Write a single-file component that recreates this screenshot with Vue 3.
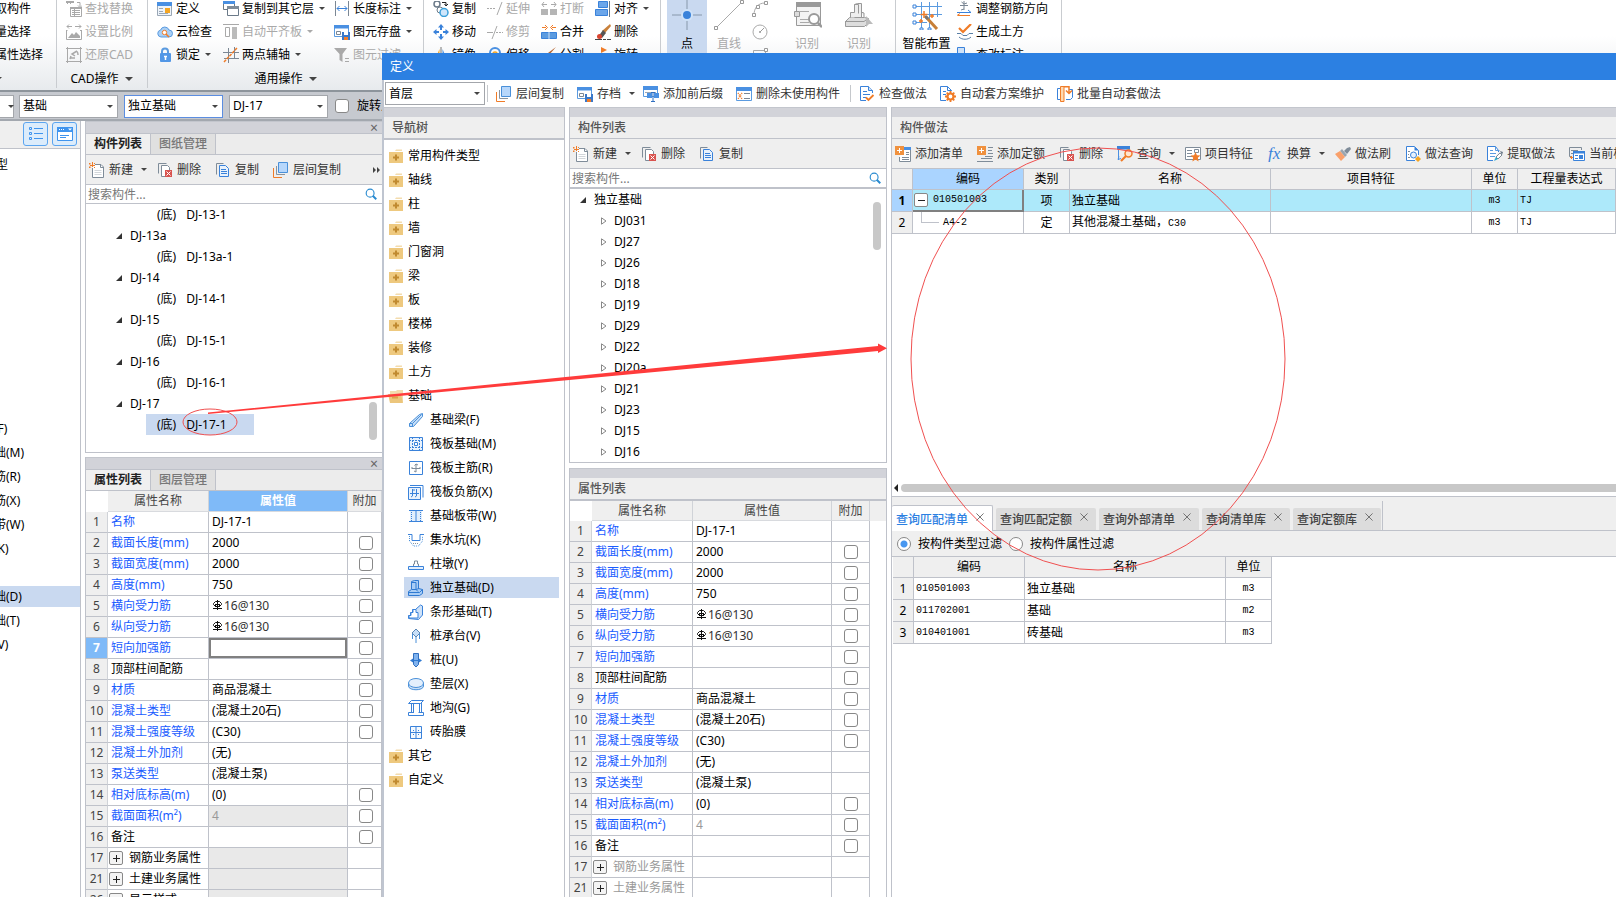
<script setup>
import { ref } from 'vue'

const icons = {
  find: '<g fill="none" stroke="#a9a9a9"><path d="M1.5 0v3M4.5 0v3M7.500 0v2M11 1.500h3v4M12 4.500l2 2 2-2"/><path d="M4.500 6.500h11v9h-11z"/><path d="M6 9.500h8M6 11.500h8M6 13.500h8M8.500 8v7"/></g><path d="M0 0h8v2H0zM4 6h12v2H4z" fill="#a9a9a9"/>',
  scale: '<g fill="none" stroke="#a9a9a9"><path d="M1 2.500h5M9 2.500h6M3 .5l-2 2 2 2M13 .5l2 2-2 2M.5 6v9.500h15V6M.5 6.500h1M14 6.500h1"/></g><path d="M2 14l4-5 2 2 2-3 4 4v2z" fill="#a9a9a9"/>',
  restore: '<g fill="none" stroke="#a9a9a9"><path d="M0 1.500h16M0 14.500h16M1.500 0v16M14.500 0v16"/><path d="M5 9l-1 3M8 6c3-3 4-1 4 2M11 4L6 7l3 2M4 11h5" stroke-width="1.500"/></g>',
  define: '<path d="M.5 1.500h14v13H.5z" fill="#eef4fb" stroke="#9aa7b5"/><path d="M0 1h15v4H0z" fill="#4a90e2"/><path d="M2 7.500h4M2 10.500h4M2 12.500h9" stroke="#9aa7b5"/><path d="M8 7h5v5H8z" fill="#f5a623"/>',
  cloud: '<path d="M4 13a3.500 3.500 0 0 1-.5-6.900A4.500 4.500 0 0 1 12 6a3.500 3.500 0 0 1 0 7z" fill="#a9cff5" stroke="#5b9be0"/><circle cx="7.500" cy="8.500" r="2.200" fill="#fff" stroke="#f07c28"/><path d="M9 10l3 3" stroke="#f07c28" stroke-width="1.500"/>',
  lock: '<path d="M5 7V4.500a3 3 0 0 1 6 0V7" fill="none" stroke="#5b9be0" stroke-width="2"/><rect x="3" y="6" width="11" height="9" rx="1" fill="#5297e6"/><path d="M8.500 9v4M7 9.500h3" stroke="#fff" stroke-width="1.500"/>',
  copyfloor: '<path d="M.5.5h11v8H.5z" fill="#fff" stroke="#6b7a89"/><path d="M0 0h12v3H0z" fill="#4a90e2"/><path d="M4.500 5.500h11v9h-11z" fill="#fff" stroke="#6b7a89"/><path d="M4 5h12v3H4z" fill="#7f8c99"/>',
  autoalign: '<path d="M0 .5h16" stroke="#a9a9a9"/><path d="M2.500 3.500h4v9h-4z" fill="none" stroke="#a9a9a9"/><path d="M9 3h5v12H9z" fill="#bbb"/>',
  twopt: '<g fill="none" stroke="#7b8794"><path d="M0 5.500h16M1 11.500h15M5.500 1v15M11.500 0v12"/></g><path d="M1 15L14 1" stroke="#f07c28" stroke-width="1.500" stroke-dasharray="3 1"/>',
  dimlen: '<path d="M1.500 0v15M14.500 0v15" stroke="#7b8794"/><path d="M3 7.500h10M5.500 5L3 7.500 5.500 10M10.500 5L13 7.500 10.500 10" fill="none" stroke="#3a82da"/>',
  save: '<path d="M.5 1.500h14v11H.5z" fill="#fff" stroke="#5b9be0"/><path d="M0 1h15v3.500H0z" fill="#4a90e2"/><path d="M2.500 7.500h4v3h-4z" fill="none" stroke="#7b8794"/><path d="M8 8h8v8H8z" fill="#3a78c8"/><path d="M10 8h4v3h-4z" fill="#fff"/><path d="M10 13h4v3h-4z" fill="#f07c28"/>',
  filter: '<path d="M0 1h13L8.500 7v8l-3-2V7z" fill="#a9a9a9"/><path d="M11 11.500h4M11 14.500h4" stroke="#a9a9a9"/>',
  copyc: '<circle cx="4" cy="3" r="3" fill="none" stroke="#6b7a89" stroke-width="1.500"/><circle cx="7" cy="9" r="3" fill="none" stroke="#6b7a89"/><circle cx="11" cy="11.500" r="4" fill="#cfe6fb" stroke="#3a9fd9" stroke-width="1.500"/><path d="M9 1.500h4v3M11.500 3l1.500 2 2-2" fill="none" stroke="#222"/>',
  move: '<path d="M8 0l3 3.500H5zM8 16l3-3.500H5zM0 8l3.500-3v6zM16 8l-3.500-3v6z" fill="#3a82da"/><path d="M8 3v3M8 10v3M3 8h3M10 8h3" stroke="#3a82da" stroke-width="2"/>',
  mirror: '<path d="M6.500 2v13H1z" fill="#f5a623"/><path d="M9.500 2v13H15z" fill="#4a90e2"/><path d="M8 0v16" stroke="#777"/>',
  extend: '<path d="M0 7.500h9" stroke="#a9a9a9" stroke-dasharray="2 1"/><path d="M15 1l-5 13" stroke="#a9a9a9"/>',
  trim: '<path d="M0 8.500h6" stroke="#a9a9a9"/><path d="M9 8.500h7" stroke="#a9a9a9" stroke-dasharray="2 1"/><path d="M10 2L5 15" stroke="#a9a9a9"/>',
  trimoff: '<path d="M3 16V6a5 5 0 0 1 10 0v10" fill="none" stroke="#4a90e2" stroke-width="2"/><path d="M6 16V7a2 2 0 0 1 4 0v9" fill="none" stroke="#f5a623" stroke-width="1.500"/>',
  breaks: '<path d="M0 8h7v6H0zM9 8h7v6H9z" fill="#b5b5b5"/><path d="M1 3.500h5M10 3.500h5M3 1L1 3.500 3 6M13 1l2 2.500L13 6" fill="none" stroke="#a9a9a9"/>',
  merge: '<path d="M.5 8.500h15v6H.5z" fill="#5b9be0" stroke="#3a82da"/><path d="M8 8v7" stroke="#cfe2f8"/><path d="M1 3.500h4M11 3.500h4M4 1l2.500 2.500L4 6M12 1L9.500 3.500 12 6" fill="none" stroke="#f07c28"/>',
  split: '<path d="M0 9h16v6H0z" fill="#5b9be0"/><path d="M15 0L8 8l-2 1 1-3z" fill="#b5622d"/>',
  align: '<path d="M3.500.5h9v6h-9zM.500 8.500h12v6H.5z" fill="#6ba6ea" stroke="#3a82da"/><path d="M14.500 0v16" stroke="#6b7a89"/>',
  erase: '<path d="M15 0l1 2-6 7-3-2z" fill="#c9803a"/><path d="M8 6l3 3-4 5-4-1z" fill="#555"/><circle cx="4.500" cy="12.500" r="2.500" fill="#d9442f"/><path d="M0 15.500h16" stroke="#444" stroke-dasharray="7 1 3 1"/>',
  rotate: '<path d="M2 14a6 6 0 1 1 12 0" fill="none" stroke="#4a90e2" stroke-width="1.800"/><path d="M6 0l6 3-6 3z" fill="#f07c28"/>',
  tlist: '<g fill="none" stroke="#3f94ee"><path d="M1.500 1.500h2v2h-2zM1.500 6.500h2v2h-2zM1.500 11.500h2v2h-2zM6 2.500h9M6 7.500h9M6 12.500h9"/></g>',
  twin: '<path d="M.500 1.500h15v13H.5z" fill="#fff" stroke="#3f94ee"/><path d="M0 1h16v5H0z" fill="#3f94ee"/><path d="M2 3.500h6" stroke="#fff" stroke-dasharray="1 1"/><path d="M11 2.500h4l-2 2z" fill="#fff"/><path d="M3 9.500h9M3 11.500h6" stroke="#3f94ee"/>',
  fresh: '<path d="M6 2.500h6l2.500 2.500v10.500h-11V6" fill="#fff" stroke="#7f8c99"/><path d="M11.500 2.500v3h3" fill="none" stroke="#7f8c99"/><path d="M5.500 8.500h7M5.500 10.500h7M5.500 12.500h7" stroke="#d2d6da"/><path d="M0 1h1.500v1.500H0zM3 0h1v5H3zM5 1h1v1H5zM1 3h5v1H1zM0 4.500h1.500V6H0zM5 5h1v1H5z" fill="#f07c28"/>',
  del: '<path d="M1.500 11.500v-10h8" fill="none" stroke="#7f8c99"/><path d="M8 14.500H4.500v-11h6l2 2V8" fill="#fff" stroke="#7f8c99"/><path d="M8 8h7v7H8z" fill="#d9534f"/><path d="M9.500 9.500l4 4M13.500 9.500l-4 4" stroke="#fff"/>',
  copy: '<path d="M1.500 12.500v-11h7" fill="none" stroke="#7f8c99"/><path d="M4.500 3.500h6l3 3v8h-9z" fill="#e9f2fc" stroke="#3a82da"/><path d="M6 7.500h5M6 9.500h6M6 11.500h6" stroke="#3a82da"/>',
  floors: '<path d="M.5 6v9.500H9" fill="none" stroke="#f07c28"/><path d="M3.500 4v8.500H12" fill="none" stroke="#8a949e"/><path d="M5.500.5h9v10h-9z" fill="#b7d7fb" stroke="#4a90d9"/>',
  search: '<circle cx="7" cy="7" r="4.500" fill="none" stroke="#2a8bd0" stroke-width="1.300"/><path d="M10 10l4 4" stroke="#2a8bd0" stroke-width="2.200"/>',
  folder: '<path d="M1 4h14v11H1z" fill="#eec97f"/><path d="M8 1.500h6V3H7z" fill="#f3dcae"/><path d="M8 6.500v6M5 9.500h6" stroke="#c08a30" stroke-width="2"/>',
  folderopen: '<path d="M2 3h6l1-1h6v12H2z" fill="#f3dcae"/><path d="M0 6h13l2 9H2z" fill="#ecc67c"/><path d="M4 9.500h6" stroke="#d9a44a" stroke-width="2"/>',
  beam: '<path d="M1.500 11.500l10-9 3-1v3l-9 10h-4z" fill="#c7dff8" stroke="#4a90d9"/><path d="M1.500 11.500h3v3M4.500 11.500l9-9" fill="none" stroke="#4a90d9"/>',
  raft: '<path d="M1.500 1.500h13v13h-13z" fill="#e9f2fc" stroke="#3a82da"/><path d="M4.500 1v14M11.500 1v14M1 4.500h14M1 11.500h14" stroke="#3a82da" stroke-dasharray="2 1"/><path d="M6.500 6.500h3v3h-3z" fill="#fff" stroke="#3a82da"/>',
  rmain: '<path d="M1.500 1.500h13v13h-13z" fill="#fff" stroke="#3a82da"/><path d="M8 4v8M4 8.500h8M6.500 5.500L8 4l2 1M6 11l2 1M4 7v2M12 7v2" fill="none" stroke="#7f8c99"/>',
  rneg: '<path d="M.500 3.500h12v12H.5z" fill="#e9f2fc" stroke="#3a82da"/><path d="M2 1.500h13v12" fill="none" stroke="#3a82da"/><path d="M2 9.500h9M4.500 5v7l-1.500 1M8.500 5v7l-1.500 1M5 6h2" fill="none" stroke="#3a82da"/>',
  strip: '<path d="M2 2.500h12v11H2z" fill="#e3effc"/><path d="M1 2.500h14M1 13.500h14M8 3v10" stroke="#3a82da"/><path d="M3.500 4v9M12.500 4v9" stroke="#3a82da" stroke-dasharray="1 1"/>',
  sump: '<path d="M0 2.500h4v6h8v-6h4" fill="none" stroke="#3a82da"/><path d="M1.500 4v5l4 5h5l4-5V4" fill="none" stroke="#4a90d9" stroke-dasharray="1 1"/><path d="M5 11.500h6" stroke="#8a949e" stroke-dasharray="1 1"/>',
  pier: '<path d="M.500 10.500h15v3H.5z" fill="#e3effc" stroke="#3a82da"/><path d="M5.500 10v-2h1v-3h3v3h1v2" fill="#fff" stroke="#7f8c99"/>',
  iso: '<path d="M.500 11.500l3-2v-8l3-1h4v8l4 1v4l-3 2h-11z" fill="#a9cdf5" stroke="#2f7ad2"/><path d="M4 9.500h4l2 2M4 2.500h4v7l3-1M.500 12.500h11l3-3" fill="none" stroke="#2f7ad2"/>',
  bar: '<path d="M.500 14.500v-3h2v-3h2v-3h3l5-4.500 2 1v9l-4 4.500z" fill="#cfe2f8" stroke="#3a82da"/><path d="M1 14v-2.500h2v-3h2v-3h3v3h2v5.500z" fill="#fff" stroke="#3a82da"/>',
  cap: '<path d="M8 1l4 4-4 4-4-4z" fill="#c7dff8" stroke="#5b87b5"/><path d="M8 9v6M4.500 6v5M11.500 6v5" stroke="#4a90d9"/>',
  pile: '<path d="M5.500 1.500h5v11L8 15l-2.500-2.500z" fill="#7fb2ee" stroke="#2f6fc0"/><path d="M2 8.500l3-2v4zM14 8.500l-3-2v4z" fill="#2f7ad2"/><path d="M3 8.500h10" stroke="#2f7ad2"/>',
  pad: '<path d="M.5 7v3c0 5 15 5 15 0V7" fill="#c7dff8" stroke="#4a90d9"/><ellipse cx="8" cy="7" rx="7.500" ry="4.500" fill="#e3effc" stroke="#4a90d9"/>',
  ditch: '<path d="M.5 3.500l3-3h12l-3 3zM3.500 4v9M5.500 4v9M11.500 4v9M13.500 3v10M.5 15.500v-3h5M10.500 12.500h5v3h-15" fill="none" stroke="#3a82da"/>',
  mould: '<path d="M2.500 2.500h11v12h-11zM8 2v13M2 8.500h12" fill="#f4f9fe" stroke="#3a82da"/><path d="M5.500 6v5M10.500 6v5" stroke="#3a82da" stroke-dasharray="1 1"/>',
  prefix: '<path d="M.5.500h14v10H.5z" fill="#fff" stroke="#5b9be0"/><path d="M0 0h15v4H0zM4 7h5v5H4zM11 7h5v5h-5z" fill="#4a90e2"/><path d="M2 6.500h11" stroke="#9aa7b5"/><path d="M10 6v9M8 6.500h4M8 15.500h4" stroke="#2f6fc0"/>',
  unused: '<path d="M.500 1.500h15v13H.5z" fill="#fff" stroke="#5b9be0"/><path d="M0 1h16v4H0z" fill="#4a90e2"/><path d="M8 7.500h6M8 12.500h6" stroke="#7b8794"/><path d="M2 7l4 6M6 7l-4 6" stroke="#f07c28" stroke-dasharray="1 1" stroke-width="1.500"/>',
  check: '<path d="M13.500 7V4.500l-4-4h-8v14H7" fill="#fff" stroke="#3a82da"/><path d="M9.500.5v4h4" fill="#cfe2f8" stroke="#3a82da"/><path d="M4 5.500h4M4 8.500h7M4 11.500h3" stroke="#3a82da"/><path d="M7 11.500l2.500 2.500 5-5" fill="none" stroke="#f07c28" stroke-width="1.800"/>',
  gear: '<path d="M11.500 5V4.500l-4-4h-7v14H6" fill="#fff" stroke="#3a82da"/><path d="M7.500.5v4h4M3 5.500h3M3 8.500h3" fill="none" stroke="#3a82da"/><circle cx="10.500" cy="10.500" r="3" fill="#fff" stroke="#f07c28" stroke-width="2.200"/><path d="M10.500 5v2M10.500 14v2M5 10.500h2M14 10.500h2M6.700 6.700l1.500 1.500M14.300 14.300l-1.500-1.500M6.700 14.300l1.500-1.500M14.300 6.700l-1.500 1.500" stroke="#f07c28" stroke-width="1.800"/>',
  batch: '<path d="M3 2.500H.5v11H3M12 3.500h3.500v8l-2 2H9" fill="#fff" stroke="#3a82da"/><path d="M3.500 15.500V.5h3.500v15z" fill="#ffd9b0" stroke="#f07c28"/><path d="M7 .8h5v6M9 4.500l3 3 3-3" fill="none" stroke="#f07c28" stroke-width="1.500"/>',
  addlist: '<path d="M9 1.500h6.500v14h-11V11" fill="#fff" stroke="#7f8c99"/><path d="M9 1h7v3H9z" fill="#4a90e2"/><path d="M11 6.500h3M11 8.500h3M7 11.500h7M7 13.500h7" stroke="#7f8c99"/><path d="M0 0h9v9H0z" fill="#f0913e"/><path d="M4.500 2v5M2 4.500h5" stroke="#fff"/>',
  addquota: '<path d="M11 1.500h5M11 4.500h4M11 7.500h5M8 10.500h8M4 12.500h11M0 15.500h16" stroke="#7f8c99"/><path d="M0 0h9v9H0z" fill="#f0913e"/><path d="M4.500 2v5M2 4.500h5" stroke="#fff"/>',
  query: '<path d="M1.500 14v-13M12 1.500v3" stroke="#4a90e2"/><path d="M0 0h13v3.500H0z" fill="#3a82da"/><path d="M2 10.500l-1 3 3-1" fill="none" stroke="#4a90e2"/><circle cx="11.500" cy="7.500" r="3.500" fill="#ffe6cf" stroke="#f07c28" stroke-width="1.500"/><path d="M9 10l-5 5" stroke="#f07c28" stroke-width="2.200"/>',
  feature: '<path d="M.500 1.500h15v12H.5z" fill="#fff" stroke="#7f8c99"/><path d="M2 4.500h5M2 7.500h5M2 10.500h5M9.500 3.500h4v3h-4z" stroke="#7f8c99" fill="none"/><path d="M10.500 6l1.400 3.200 3.600.3-2.700 2.300.8 3.600-3.100-1.900-3.100 1.900.8-3.600L5.500 9.500l3.600-.3z" fill="#f07c28"/>',
  fx: '<text x="1" y="13" font-family="Liberation Serif, serif" font-style="italic" font-size="17" fill="#3a82da">fx</text>',
  brush: '<path d="M12 2l3-1 1 2-4 5-3-3z" fill="#7f8c99"/><path d="M7 3l5 6-2 2-5-6z" fill="#9aa5af"/><path d="M5 5l5 6-4 4-6-7z" fill="#f9a06b"/>',
  docsearch: '<path d="M13.500 9V4.500l-4-4h-8v14H10" fill="#fff" stroke="#3a82da"/><path d="M9.500.5v4h4z" fill="#3a82da"/><circle cx="8.500" cy="9" r="3" fill="#e6f1fd" stroke="#3a82da"/><path d="M3 5.500h2M3 8.500h1M3 11.500h2" stroke="#7f8c99"/><path d="M13 10l3 3-3 3-3-3z" fill="#f5a623"/>',
  extract: '<path d="M11.500 6V4.500l-3-4h-8v14H6" fill="#fff" stroke="#3a82da"/><path d="M8.500.5v4h4M3 4.500h3M3 7.500h6M3 10.500h5" fill="none" stroke="#5b9be0"/><path d="M9 11l4-4 2 2-4 4z" fill="#fff" stroke="#7f8c99"/><path d="M13 5l3 1-1 3z" fill="#6b7a89"/><path d="M7 15l2-4 2 2z" fill="#25a9c9"/>',
  current: '<path d="M12.500 4V1.500H.5v9H3M2 4.500h7M2 7.500h2" fill="none" stroke="#7f8c99"/><path d="M4.500 5.500h11v9h-11z" fill="#fff" stroke="#3a82da"/><path d="M4 5h12v2.500H4zM10 9h4v4h-4z" fill="#3a82da"/><path d="M6 9.500h3M6 12.500h3" stroke="#3a82da"/><path d="M1 11.500h3M2.500 10v3" stroke="#f07c28"/>',
  steel: '<path d="M7 0v9M3 4.500h8M4.500 1l2.500 2 3-1M4 9l3-1" fill="none" stroke="#7b8794"/><path d="M0 11.500h14M11 9l3 2.500" fill="none" stroke="#3a82da"/><path d="M1 14.500h12M3 12.500l-3 2" fill="none" stroke="#f07c28"/>',
  earth: '<path d="M2 4l4 4 8-8" fill="none" stroke="#f07c28" stroke-width="2.200"/><path d="M0 9.500h4l2 2h4l2-2h4M2 13c3 3 9 3 12 0" fill="none" stroke="#5a7fa5"/>',
  modmark: '<path d="M.5.500h7v9h-7z" fill="#cfe2f8" stroke="#3a82da"/><path d="M5 6.500h10" stroke="#3a82da"/>',
  rebar: '<path d="M3.500 1.500h4l2 2v1l-2 2h-4l-2-2v-1z" fill="none" stroke="#111"/><path d="M5.500 0v10M1 8.500h9M3.500 4v3M7.500 4v3M3 4.500h5" stroke="#111"/>',
  arc: '<path d="M2 14C2 7 6 2 13 2" fill="none" stroke="#aaa"/><path d="M.5 12.500h3v3h-3zM12.500.5h3v3h-3zM4.500 4.500h3v3h-3z" fill="#fff" stroke="#999"/>',
  circ: '<circle cx="8" cy="8" r="7" fill="none" stroke="#aaa"/><path d="M7.500 7.500h1v1h-1zM8 8l4-4" fill="none" stroke="#999"/>',
  rect: '<path d="M1.500 3.500h12v10h-12z" fill="none" stroke="#aaa"/><path d="M12.500 1.500h3v3h-3z" fill="#fff" stroke="#999"/>'
}

const bigIcons = {
  point: '<path d="M15 0v30M0 15h30" stroke="#8798ab"/><circle cx="15" cy="15" r="6" fill="#cfe2f8"/><circle cx="15" cy="15" r="4" fill="#3a82da"/>',
  line: '<path d="M2 28L28 2" stroke="#aaa"/><path d="M.500 26.500h3v3h-3zM26.500 .5h3v3h-3z" fill="#fff" stroke="#999"/>',
  recog1: '<path d="M4.500 3.500h24v22h-24z" fill="#f3f3f3" stroke="#999"/><path d="M4 2h25v5H4z" fill="#999"/><path d="M8 11.500h9M8 19.500h9M8 22.500h9" stroke="#aaa"/><path d="M2.500 11.500h5v5h-5z" fill="#ddd" stroke="#999"/><circle cx="22" cy="19" r="5" fill="#fff" stroke="#999" stroke-width="2"/><path d="M26 23l4 4" stroke="#999" stroke-width="2.500"/>',
  recog2: '<path d="M1.500 21.500l4-4h15l4 1v4l-4 4h-19z" fill="#ddd" stroke="#999"/><path d="M6.500 17.500v-5h4v-8l3-1h4v14h-7M17 12l3 1v4" fill="#eee" stroke="#999"/><path d="M1 21.500h19l4-3M10.500 4.500h4v9" fill="none" stroke="#999"/><path d="M22 16l7 8h-4l-3 3z" fill="#bbb"/>',
  smart: '<g fill="none" stroke="#5b9be0"><path d="M3 6.500h27M3 14.500h27M3 22.500h12M9.500 2v27M17.500 2v27M25.500 2v15"/></g><path d="M1 5h3v3H1zM1 13h3v3H1zM1 21h3v3H1zM8 28h3v2H8zM16 28h3v2h-3z" fill="#fff" stroke="#3a82da"/><path d="M14 17l11 12" stroke="#c77f38" stroke-width="3"/><path d="M13 16l3 3" stroke="#777" stroke-width="3"/><path d="M12 11v7M8.500 14.500h7M20 14v4M9 19v4M7 21h4M18 16h4" stroke="#f07c28" stroke-width="1.500"/>'
}

const ribbonGroups = [
  { name: 'pick', title: '', cols: [[
    { text: '拾取构件' }, { text: '批量选择' }, { text: '按属性选择' }]] },
  { name: 'cad', title: 'CAD操作', cols: [[
    { icon: 'find', text: '查找替换', dim: true }, { icon: 'scale', text: '设置比例', dim: true }, { icon: 'restore', text: '还原CAD', dim: true }]] },
  { name: 'common', title: '通用操作', cols: [
    [{ icon: 'define', text: '定义' }, { icon: 'cloud', text: '云检查' }, { icon: 'lock', text: '锁定', caret: true }],
    [{ icon: 'copyfloor', text: '复制到其它层', caret: true }, { icon: 'autoalign', text: '自动平齐板', caret: true, dim: true }, { icon: 'twopt', text: '两点辅轴', caret: true }],
    [{ icon: 'dimlen', text: '长度标注', caret: true }, { icon: 'save', text: '图元存盘', caret: true }, { icon: 'filter', text: '图元过滤', dim: true }]] },
  { name: 'modify', title: '修改', cols: [
    [{ icon: 'copyc', text: '复制' }, { icon: 'move', text: '移动' }, { icon: 'mirror', text: '镜像' }],
    [{ icon: 'extend', text: '延伸', dim: true }, { icon: 'trim', text: '修剪', dim: true }, { icon: 'trimoff', text: '偏移' }],
    [{ icon: 'breaks', text: '打断', dim: true }, { icon: 'merge', text: '合并' }, { icon: 'split', text: '分割' }],
    [{ icon: 'align', text: '对齐', caret: true }, { icon: 'erase', text: '删除' }, { icon: 'rotate', text: '旋转' }]] }
]
const smartTools = [
  { icon: 'steel', text: '调整钢筋方向' }, { icon: 'earth', text: '生成土方' }, { icon: 'modmark', text: '查改标注' }
]

const nav = [
  { text: '常用构件类型' }, { text: '轴线' }, { text: '柱' }, { text: '墙' }, { text: '门窗洞' }, { text: '梁' },
  { text: '板' }, { text: '楼梯' }, { text: '装修' }, { text: '土方' }, { text: '基础', open: true },
  { text: '基础梁(F)', icon: 'beam' }, { text: '筏板基础(M)', icon: 'raft' }, { text: '筏板主筋(R)', icon: 'rmain' },
  { text: '筏板负筋(X)', icon: 'rneg' }, { text: '基础板带(W)', icon: 'strip' }, { text: '集水坑(K)', icon: 'sump' },
  { text: '柱墩(Y)', icon: 'pier' }, { text: '独立基础(D)', icon: 'iso', on: true }, { text: '条形基础(T)', icon: 'bar' },
  { text: '桩承台(V)', icon: 'cap' }, { text: '桩(U)', icon: 'pile' }, { text: '垫层(X)', icon: 'pad' },
  { text: '地沟(G)', icon: 'ditch' }, { text: '砖胎膜', icon: 'mould' }, { text: '其它' }, { text: '自定义' }
]

const mainTree = [
  { child: 'DJ-13-1' }, { node: 'DJ-13a' }, { child: 'DJ-13a-1' }, { node: 'DJ-14' }, { child: 'DJ-14-1' },
  { node: 'DJ-15' }, { child: 'DJ-15-1' }, { node: 'DJ-16' }, { child: 'DJ-16-1' }, { node: 'DJ-17' }, { child: 'DJ-17-1', on: true }
]
const dlgTree = ['DJ031', 'DJ27', 'DJ26', 'DJ18', 'DJ19', 'DJ29', 'DJ22', 'DJ20a', 'DJ21', 'DJ23', 'DJ15', 'DJ16']

const props = [
  { n: 1, name: '名称', val: 'DJ-17-1' },
  { n: 2, name: '截面长度(mm)', val: '2000', chk: true },
  { n: 3, name: '截面宽度(mm)', val: '2000', chk: true },
  { n: 4, name: '高度(mm)', val: '750', chk: true },
  { n: 5, name: '横向受力筋', val: '16@130', chk: true, rebar: true },
  { n: 6, name: '纵向受力筋', val: '16@130', chk: true, rebar: true },
  { n: 7, name: '短向加强筋', val: '', chk: true },
  { n: 8, name: '顶部柱间配筋', val: '', chk: true, plain: true },
  { n: 9, name: '材质', val: '商品混凝土', chk: true },
  { n: 10, name: '混凝土类型', val: '(混凝土20石)', chk: true },
  { n: 11, name: '混凝土强度等级', val: '(C30)', chk: true },
  { n: 12, name: '混凝土外加剂', val: '(无)' },
  { n: 13, name: '泵送类型', val: '(混凝土泵)' },
  { n: 14, name: '相对底标高(m)', val: '(0)', chk: true },
  { n: 15, name: '截面面积(m²)', val: '4', chk: true, locked: true },
  { n: 16, name: '备注', val: '', chk: true, plain: true },
  { n: 17, name: '钢筋业务属性', group: true },
  { n: 21, name: '土建业务属性', group: true },
  { n: 26, name: '显示样式', group: true }
]

const listTools = [
  { icon: 'fresh', text: '新建', caret: true }, { icon: 'del', text: '删除' }, { icon: 'copy', text: '复制' }
]
const mainTools = [...listTools, { icon: 'floors', text: '层间复制' }]
const dlgTools = [
  { icon: 'floors', text: '层间复制' }, { icon: 'save', text: '存档', caret: true }, { icon: 'prefix', text: '添加前后缀' },
  { icon: 'unused', text: '删除未使用构件' }, { sep: true }, { icon: 'check', text: '检查做法' },
  { icon: 'gear', text: '自动套方案维护' }, { icon: 'batch', text: '批量自动套做法' }
]
const methodTools = [
  { icon: 'addlist', text: '添加清单' }, { icon: 'addquota', text: '添加定额' }, { icon: 'del', text: '删除' },
  { icon: 'query', text: '查询', caret: true }, { icon: 'feature', text: '项目特征' }, { icon: 'fx', text: '换算', caret: true },
  { icon: 'brush', text: '做法刷' }, { icon: 'docsearch', text: '做法查询' }, { icon: 'extract', text: '提取做法' },
  { icon: 'current', text: '当前构件' }
]
const queryTabs = ['查询匹配清单', '查询匹配定额', '查询外部清单', '查询清单库', '查询定额库']
const matches = [
  { code: '010501003', name: '独立基础', unit: 'm3' },
  { code: '011702001', name: '基础', unit: 'm2' },
  { code: '010401001', name: '砖基础', unit: 'm3' }
]
const filter = ref('type')
</script>

<template>
  <div class="screen">
    <div class="main">
      <header class="ribbon">
        <section v-for="g in ribbonGroups" :key="g.name" class="group" :class="g.name">
          <div class="cols">
            <div v-for="(c, i) in g.cols" :key="i" class="col">
              <button v-for="t in c" :key="t.text" class="rtool" :class="{ dim: t.dim }">
                <svg v-if="t.icon" class="ico" viewBox="0 0 16 16" v-html="icons[t.icon]"></svg>
                <span>{{ t.text }}</span>
                <i v-if="t.caret" class="caret"></i>
              </button>
            </div>
          </div>
          <div class="gtitle">{{ g.title }}<i class="caret big"></i></div>
        </section>
        <section class="group draw">
          <button class="bigtool on"><svg viewBox="0 0 30 30" v-html="bigIcons.point"></svg><span>点</span></button>
          <button class="bigtool dim line"><svg viewBox="0 0 30 30" v-html="bigIcons.line"></svg><span>直线</span></button>
          <div class="col shapes">
            <button v-for="s in ['arc', 'circ', 'rect']" :key="s" class="rtool" :aria-label="s">
              <svg class="ico" viewBox="0 0 16 16" v-html="icons[s]"></svg>
            </button>
          </div>
          <button class="bigtool wide dim"><svg viewBox="0 0 30 30" v-html="bigIcons.recog1"></svg><span>识别</span></button>
          <button class="bigtool wide dim"><svg viewBox="0 0 30 30" v-html="bigIcons.recog2"></svg><span>识别</span></button>
        </section>
        <section class="group smart">
          <button class="bigtool wide"><svg viewBox="0 0 30 30" v-html="bigIcons.smart"></svg><span>智能布置</span></button>
          <div class="col">
            <button v-for="t in smartTools" :key="t.text" class="rtool">
              <svg class="ico" viewBox="0 0 16 16" v-html="icons[t.icon]"></svg><span>{{ t.text }}</span>
            </button>
          </div>
        </section>
      </header>

      <div class="options">
        <div class="combo floor"><select aria-label="楼层"><option></option></select><i class="caret"></i></div>
        <div class="combo"><select aria-label="类别"><option>基础</option></select><i class="caret"></i></div>
        <div class="combo focus"><select aria-label="类型"><option>独立基础</option></select><i class="caret"></i></div>
        <div class="combo"><select aria-label="构件"><option>DJ-17</option></select><i class="caret"></i></div>
        <label class="turn"><input type="checkbox" class="tick"><span>旋转点角度</span></label>
      </div>

      <div class="mbody">
        <aside class="mnav">
          <div class="mnavbar">
            <button class="toggle" aria-label="列表"><svg class="ico" viewBox="0 0 16 16" v-html="icons.tlist"></svg></button>
            <button class="toggle" aria-label="窗口"><svg class="ico" viewBox="0 0 16 16" v-html="icons.twin"></svg></button>
          </div>
          <ul class="navlist behind">
            <li v-for="n in nav" :key="n.text" :class="{ sub: n.icon, on: n.on }"><span>{{ n.text }}</span></li>
          </ul>
        </aside>

        <div class="mcol">
          <section class="panel list">
            <div class="strip"><button class="close" aria-label="关闭">×</button></div>
            <div class="tabs"><button class="tab on">构件列表</button><button class="tab">图纸管理</button></div>
            <div class="tools">
              <button v-for="t in mainTools" :key="t.text" class="tool" :class="{ drop: t.caret }">
                <svg class="ico" viewBox="0 0 16 16" v-html="icons[t.icon]"></svg><span>{{ t.text }}</span><i v-if="t.caret" class="caret"></i>
              </button>
              <button class="more" aria-label="更多"><svg viewBox="0 0 8 6"><path d="M0 0l3 3-3 3zM4 0l3 3-3 3z" fill="#444" /></svg></button>
            </div>
            <div class="search">
              <input type="text" placeholder="搜索构件..." aria-label="搜索构件">
              <svg class="sico" viewBox="0 0 16 16" v-html="icons.search"></svg>
            </div>
            <div class="treebox">
              <ul class="tree mtree">
                <li v-for="r in mainTree" :key="r.node || r.child" :class="r.node ? 'node' : 'leaf'">
                  <template v-if="r.node"><svg class="tri" viewBox="0 0 6 6"><path d="M6 0v6H0z" fill="#333" /></svg><span>{{ r.node }}</span></template>
                  <span v-else class="pill" :class="{ on: r.on }"><span>(底)</span><span>{{ r.child }}</span></span>
                </li>
              </ul>
              <div class="vbar low"><i></i></div>
            </div>
          </section>

          <section class="panel">
            <div class="strip"><button class="close" aria-label="关闭">×</button></div>
            <div class="tabs"><button class="tab on">属性列表</button><button class="tab">图层管理</button></div>
            <table class="props mprops">
              <colgroup><col class="c-num"><col class="c-name"><col class="c-val"><col></colgroup>
              <thead><tr><th class="corner"></th><th>属性名称</th><th class="hot">属性值</th><th>附加</th></tr></thead>
              <tbody>
                <tr v-for="p in props" :key="p.n">
                  <th scope="row" :class="{ hot: p.n === 7 }">{{ p.n }}</th>
                  <td class="name" :class="{ plain: p.plain || p.group }">
                    <span v-if="p.group" class="fold"><button class="plus" :aria-label="'展开' + p.name"></button>{{ p.name }}</span>
                    <template v-else>{{ p.name }}</template>
                  </td>
                  <td class="val" :class="{ locked: p.locked || p.group, edit: p.n === 7 }">
                    <input v-if="p.n === 7" type="text" :aria-label="p.name">
                    <span v-else-if="p.rebar" class="bars"><svg viewBox="0 0 12 11" v-html="icons.rebar"></svg>{{ p.val }}</span>
                    <template v-else>{{ p.val }}</template>
                  </td>
                  <td class="add"><input v-if="p.chk" type="checkbox" class="tick" :aria-label="p.name + '附加'"></td>
                </tr>
              </tbody>
            </table>
          </section>
        </div>
      </div>
    </div>

    <div class="dialog">
      <div class="titlebar">定义</div>
      <div class="dtools">
        <div class="combo"><select aria-label="楼层"><option>首层</option></select><i class="caret"></i></div>
        <i class="sep"></i>
        <template v-for="(t, i) in dlgTools" :key="i">
          <i v-if="t.sep" class="sep"></i>
          <button v-else class="tool" :class="{ drop: t.caret }">
            <svg class="ico" viewBox="0 0 16 16" v-html="icons[t.icon]"></svg><span>{{ t.text }}</span><i v-if="t.caret" class="caret"></i>
          </button>
        </template>
      </div>
      <div class="dbody">
        <section class="panel dnav">
          <div class="strip"></div>
          <h2 class="head thick">导航树</h2>
          <ul class="navlist">
            <li v-for="n in nav" :key="n.text" :class="{ sub: n.icon, on: n.on }">
              <svg class="ico" viewBox="0 0 16 16" v-html="icons[n.icon || (n.open ? 'folderopen' : 'folder')]"></svg><span>{{ n.text }}</span>
            </li>
          </ul>
        </section>

        <div class="dmid">
          <section class="panel list">
            <div class="strip"></div>
            <h2 class="head">构件列表</h2>
            <div class="tools">
              <button v-for="t in listTools" :key="t.text" class="tool" :class="{ drop: t.caret }">
                <svg class="ico" viewBox="0 0 16 16" v-html="icons[t.icon]"></svg><span>{{ t.text }}</span><i v-if="t.caret" class="caret"></i>
              </button>
            </div>
            <div class="search thick">
              <input type="text" placeholder="搜索构件..." aria-label="搜索构件">
              <svg class="sico" viewBox="0 0 16 16" v-html="icons.search"></svg>
            </div>
            <div class="treebox">
              <ul class="tree dtree">
                <li class="root"><svg class="tri" viewBox="0 0 6 6"><path d="M6 0v6H0z" fill="#333" /></svg><span>独立基础</span></li>
                <li v-for="d in dlgTree" :key="d" class="kid">
                  <svg class="tri shut" viewBox="0 0 6 8"><path d="M.5.8L5 4 .5 7.200z" fill="#fff" stroke="#888" /></svg><span>{{ d }}</span>
                </li>
              </ul>
              <div class="vbar high"><i></i></div>
            </div>
          </section>
          <section class="panel grow">
            <div class="strip"></div>
            <h2 class="head thick">属性列表</h2>
            <div class="pwrap">
              <table class="props dprops">
                <colgroup><col class="c-num"><col class="c-name"><col class="c-val"><col></colgroup>
                <thead><tr><th class="corner"></th><th>属性名称</th><th>属性值</th><th>附加</th></tr></thead>
                <tbody>
                  <tr v-for="p in props.slice(0, 18)" :key="p.n">
                    <th scope="row">{{ p.n }}</th>
                    <td class="name" :class="{ plain: p.plain, faded: p.group }">
                      <span v-if="p.group" class="fold"><button class="plus" :aria-label="'展开' + p.name"></button>{{ p.name }}</span>
                      <template v-else>{{ p.name }}</template>
                    </td>
                    <td class="val" :class="{ faded: p.locked }">
                      <span v-if="p.rebar" class="bars"><svg viewBox="0 0 12 11" v-html="icons.rebar"></svg>{{ p.val }}</span>
                      <template v-else>{{ p.val }}</template>
                    </td>
                    <td class="add"><input v-if="p.chk" type="checkbox" class="tick" :aria-label="p.name + '附加'"></td>
                  </tr>
                </tbody>
              </table>
            </div>
          </section>
        </div>

        <div class="dright">
          <section class="panel method">
            <div class="strip"></div>
            <h2 class="head">构件做法</h2>
            <div class="tools">
              <button v-for="t in methodTools" :key="t.text" class="tool" :class="{ drop: t.caret }">
                <svg class="ico" viewBox="0 0 16 16" v-html="icons[t.icon]"></svg><span>{{ t.text }}</span><i v-if="t.caret" class="caret"></i>
              </button>
            </div>
            <table class="grid wide">
              <colgroup><col class="g-num"><col class="g-code"><col class="g-unit"><col class="g-name"><col class="g-name"><col class="g-unit"><col></colgroup>
              <thead><tr><th></th><th class="hot">编码</th><th>类别</th><th>名称</th><th>项目特征</th><th>单位</th><th>工程量表达式</th></tr></thead>
              <tbody>
                <tr class="sel">
                  <th scope="row">1</th>
                  <td class="code cur"><span class="fold"><button class="plus minus" aria-label="收起"></button><span class="mono">010501003</span></span></td>
                  <td class="mid">项</td><td>独立基础</td><td></td><td class="mid mono">m3</td><td class="mono">TJ</td>
                </tr>
                <tr>
                  <th scope="row">2</th>
                  <td class="code"><span class="fold"><i class="elbow"></i><span class="mono">A4-2</span></span></td>
                  <td class="mid">定</td><td>其他混凝土基础，<span class="mono">C30</span></td><td></td><td class="mid mono">m3</td><td class="mono">TJ</td>
                </tr>
              </tbody>
            </table>
            <div class="hbar"><svg viewBox="0 0 4 8"><path d="M4 0v8L0 4z" fill="#222" /></svg><i></i></div>
          </section>
          <section class="query">
            <div class="qtabs">
              <div v-for="(t, i) in queryTabs" :key="t" class="qtab" :class="{ on: i === 0 }">
                <button class="qname">{{ t }}</button>
                <button class="qx" :aria-label="'关闭' + t"><svg viewBox="0 0 9 9"><path d="M.5.5l8 8M8.500.5l-8 8" stroke="#666" /></svg></button>
              </div>
              <i class="qend"></i>
            </div>
            <div class="filters">
              <label><input v-model="filter" type="radio" value="type" name="filter"><span>按构件类型过滤</span></label>
              <label><input v-model="filter" type="radio" value="prop" name="filter"><span>按构件属性过滤</span></label>
            </div>
            <table class="grid small">
              <colgroup><col class="g-num"><col class="g-code"><col class="g-name"><col class="g-unit"></colgroup>
              <thead><tr><th></th><th>编码</th><th>名称</th><th>单位</th></tr></thead>
              <tbody>
                <tr v-for="(m, i) in matches" :key="m.code">
                  <th scope="row">{{ i + 1 }}</th><td class="mono">{{ m.code }}</td><td>{{ m.name }}</td><td class="mid mono">{{ m.unit }}</td>
                </tr>
              </tbody>
            </table>
          </section>
        </div>
      </div>
    </div>

    <svg class="marks" width="1616" height="897" viewBox="0 0 1616 897">
      <ellipse cx="210" cy="422" rx="27" ry="13" fill="none" stroke="#f05050" />
      <ellipse cx="1098" cy="359" rx="187" ry="211" fill="none" stroke="#f05050" />
      <path d="M208 412.500L878 346V343.500L887 348.300 878 353V351L208 414z" fill="#ff3b3b" />
    </svg>
  </div>
</template>

<style>
html, body, #app { height: 100%; }
body { overflow: hidden; }
</style>

<style scoped>
.screen { position: relative; height: 100%; overflow: hidden; background: #fff; color: #000;
  font: 12px/16px "Noto Sans", "Noto Sans CJK SC", sans-serif; }
.screen *, .screen *::before, .screen *::after { box-sizing: border-box; }
button, input, select { font: inherit; color: inherit; margin: 0; padding: 0; border: 0; background: none; }
button { display: flex; align-items: center; white-space: nowrap; flex: none; }
ul { list-style: none; margin: 0; padding: 0; }
svg { display: block; flex: none; }
.ico { width: 16px; height: 16px; margin-right: 3px; }
.caret { display: block; flex: none; border: 3px solid transparent; border-top-color: #444; border-bottom: 0; margin-left: 8px; }
.rtool .caret { margin-left: 5px; }
.caret.big { border-width: 4px; border-bottom: 0; margin-left: 6px; }
.dim { color: #a9a9a9; }
.dim .caret { border-top-color: #a9a9a9; }

/* main window */
.main { display: flex; flex-direction: column; height: 100%; overflow: hidden; }
.ribbon { display: flex; flex: none; height: 92px; background: linear-gradient(#fff 40%, #e7eaed); border-bottom: 2px solid #8d949b; overflow: hidden; }
.group { display: flex; flex-direction: column; flex: none; height: 88px; border-right: 1px solid #c9ccd0; }
.cols { display: flex; flex: none; margin-top: -3px; }
.rtool { height: 23px; }
.gtitle { display: flex; align-items: center; justify-content: center; margin-top: 5px; height: 16px; }
.pick { width: 57px; }
.pick .cols { margin-left: -17px; }
.pick .gtitle { justify-content: flex-start; margin-left: -12px; }
.cad { width: 91px; padding-left: 9px; }
.cad .gtitle { margin-left: -10px; }
.common { width: 276px; }
.common .cols { padding-left: 9px; }
.common .col:nth-child(1) { width: 66px; }
.common .col:nth-child(2) { width: 111px; }
.modify { width: 237px; }
.modify .cols { padding-left: 9px; }
.modify .col { width: 54px; }
.draw, .smart { flex-direction: row; }
.draw { width: 235px; padding-left: 6px; }
.smart { width: 166px; }
.shapes { width: 32px; padding-left: 3px; }
.draw .col, .smart .col { margin-top: -3px; }
.bigtool { flex-direction: column; width: 40px; height: 80px; }
.bigtool svg { width: 30px; height: 30px; margin-bottom: 6px; }
.bigtool.on { background: #c9d9f0; }
.bigtool.line { margin-left: 2px; }
.bigtool.wide { width: 52px; }
.smart .bigtool.wide { width: 61px; }

.options { display: flex; align-items: center; flex: none; gap: 6px; height: 29px; padding-top: 1px; background: #c6c9cf; border-bottom: 2px solid #a3a8af; }
.combo { display: grid; align-items: center; width: 99px; height: 23px; border: 1px solid #a3a6ab; background: #fff; }
.combo > * { grid-area: 1 / 1; }
.combo select { appearance: none; width: 100%; height: 21px; padding-left: 3px; outline: 0; }
.combo .caret { justify-self: end; margin-right: 4px; pointer-events: none; }
.combo.focus { border-color: #5b8de0; }
.combo.floor { width: 14px; border-left: 0; margin-right: -1px; }
.turn { display: flex; align-items: center; gap: 8px; margin-left: 1px; white-space: nowrap; }
.tick { appearance: none; display: block; width: 14px; height: 14px; border: 1px solid #888; border-radius: 3px; background: #fff; }

.mbody { display: flex; flex: 1; min-height: 0; }
.mnav { width: 81px; flex: none; border-right: 1px solid #bfc2ca; overflow: hidden; }
.mnavbar { display: flex; justify-content: flex-end; gap: 4px; height: 28px; padding: 1px 3px; background: #efefef; border-bottom: 1px solid #bfc2ca; }
.toggle { justify-content: center; width: 25px; height: 24px; border: 1px solid #5ba5f0; border-radius: 3px; background: #dcecfb; }
.toggle .ico { margin: 0; }
.navlist { padding-top: 5px; }
.navlist li { display: flex; align-items: center; height: 21px; margin: 0 5px 3px 0; padding-left: 4px; white-space: nowrap; }
.navlist li .ico { margin-right: 4px; }
.navlist li.sub { margin-left: 20px; padding-left: 4px; }
.navlist li.sub .ico { margin-right: 6px; }
.navlist li.on { background: #c9d9f0; }
.behind { margin-left: -64px; }
.behind li { margin-right: 0; padding-left: 0; }
.behind li.sub { margin-left: 0; padding-left: 22px; }

.mcol { width: 297px; flex: none; margin-left: 4px; display: flex; flex-direction: column; gap: 4px; }
.panel { border-left: 1px solid #bfc2ca; border-right: 1px solid #bfc2ca; display: flex; flex-direction: column; }
.panel.list { border-bottom: 1px solid #bfc2ca; }
.mcol .panel { border-right: 0; flex: none; }
.strip { flex: none; height: 10px; background: #d2d3d9; border-top: 1px solid #c3c6cd; }
.mcol .strip { display: flex; justify-content: flex-end; align-items: center; height: 12px; }
.close { width: 16px; justify-content: center; line-height: 10px; font-size: 14px; color: #666; }
.tabs { display: flex; flex: none; height: 22px; background: #ececec; border-top: 1px solid #bfc2ca; border-bottom: 1px solid #bfc2ca; }
.tab { width: 65px; justify-content: center; background: #e0e0e0; border-right: 1px solid #bfc2ca; color: #777; font-weight: 500; }
.tab.on { background: #f0f0f0; color: #222; font-weight: 700; }
.tools { display: flex; flex: none; height: 30px; padding-left: 3px; background: #efefef; border-bottom: 1px solid #bfc2ca; overflow: hidden; color: #333; }
.tool { padding-right: 14px; }
.tool.drop { padding-right: 10px; }
.tool .ico { margin-right: 4px; }
.more { margin-left: auto; padding-right: 1px; }
.more svg { width: 8px; height: 6px; }
.search { display: flex; align-items: center; flex: none; height: 19px; padding: 0 4px 0 2px; border-bottom: 1px solid #bfc2ca; background: #fff; }
.search.thick { height: 20px; border-bottom-width: 2px; }
.search input { flex: 1; min-width: 0; outline: 0; height: 17px; }
.search input::placeholder { color: #777; opacity: 1; }
.sico { width: 14px; height: 14px; }
.treebox { display: flex; justify-content: space-between; background: #fff; }
.mcol .treebox { height: 248px; }
.tree li { display: flex; align-items: center; height: 21px; }
.tri { width: 6px; height: 6px; margin-right: 8px; }
.tri.shut { height: 8px; margin-right: 7px; }
.mtree .node { padding-left: 30px; }
.mtree .leaf { padding-left: 60px; }
.pill { display: flex; align-items: center; gap: 10px; width: 108px; height: 21px; padding-left: 11px; }
.pill.on { background: #c9d9f0; }
.dtree .root { padding-left: 10px; }
.dtree .kid { padding-left: 31px; }
.vbar { width: 8px; margin-right: 5px; }
.vbar i { display: block; border-radius: 4px; background: #c8c8c8; }
.vbar.low { align-self: flex-end; margin-bottom: 12px; }
.vbar.low i { height: 38px; }
.vbar.high { padding-top: 13px; }
.vbar.high i { height: 48px; }

table { border-collapse: separate; border-spacing: 0; table-layout: fixed; width: 100%; background: #fff; }
th, td { padding: 0; font-weight: 400; white-space: nowrap; overflow: hidden; border-right: 1px solid #bfc2ca; border-bottom: 1px solid #bfc2ca; }
.props th, .props td { height: 21px; }
.props th { background: #efefef; color: #444; text-align: center; border-right-color: #d0d3d8; }
.props thead th { height: 20px; border-bottom-color: #d8dade; }
.mprops thead th { height: 21px; }
.mprops .add { padding-left: 2px; }
.props .corner { background: #fff; border-color: #fff; }
.props th.hot { background: #7fbaf8; color: #fff; font-weight: 700; }
.c-num { width: 22px; }
.c-name { width: 101px; }
.c-val { width: 139px; }
.name { padding-left: 3px; color: #1a5cff; }
.name.plain { color: #000; }
.val { padding-left: 3px; }
.val.locked { background: #e9e9e9; color: #999; }
.name.faded, .val.faded { color: #999; }
.val.edit { padding: 0; }
.val.edit input { display: block; width: 100%; height: 20px; border: 2px solid #808080; outline: 0; }
.add .tick { margin: 0 auto; }
.bars { display: flex; align-items: flex-start; color: #333; }
.bars svg { width: 12px; height: 11px; margin-top: 2px; }
.fold { display: flex; align-items: center; }
.plus { justify-content: center; width: 14px; height: 14px; margin: 0 6px 0 -2px; border: 1px solid #888; border-radius: 2px;
  background: linear-gradient(#222, #222) center / 7px 1px no-repeat, linear-gradient(#222, #222) center / 1px 7px no-repeat, #f4f4f4; }
.plus.minus { margin: 0 5px 0 0; background: linear-gradient(#222, #222) center / 7px 1px no-repeat, #fff; }

/* definition window */
.dialog { position: absolute; left: 382px; top: 53px; right: 0; bottom: 0; display: flex; flex-direction: column; background: #fff; border-left: 2px solid #bfc5d0; }
.titlebar { flex: none; height: 27px; margin-left: -2px; padding: 6px 8px; background: #2c80e2; color: #fff; }
.dtools { display: flex; align-items: center; flex: none; height: 27px; padding-left: 1px; color: #333; }
.dtools .combo { width: 100px; margin-right: 2px; color: #000; }
.sep { width: 1px; height: 17px; background: #c5c8cc; margin-right: 8px; }
.dtools .tool { padding-right: 13px; }
.dtools .tool.drop { padding-right: 8px; }
.dtools .tool:has(+ .sep) { padding-right: 10px; }
.dbody { display: flex; flex: 1; min-height: 0; }
.head { flex: none; margin: 0; height: 22px; padding: 3px 8px 2px; background: #efefef; border-bottom: 1px solid #bfc2ca; font: inherit; font-weight: 500; color: #555; }
.head.thick { height: 23px; border-bottom-width: 2px; }
.dnav { width: 181px; flex: none; border-left: 0; }
.dmid { display: flex; flex-direction: column; gap: 5px; width: 318px; flex: none; margin-left: 4px; }
.dmid .list { flex: none; }
.grow { flex: 1; min-height: 0; overflow: hidden; }
.pwrap { background: linear-gradient(#efefef 20px, #fff 20px); }
.dprops { width: 300px; }

.dright { display: flex; flex-direction: column; flex: 1; min-width: 0; margin-left: 4px; }
.method { flex: none; height: 390px; border-right: 0; border-bottom: 1px solid #bfc2ca; overflow: hidden; }
.grid th, .grid td { height: 22px; }
.grid td { padding-left: 2px; }
.grid th { background: #efefef; text-align: center; }
.grid thead th { height: 21px; }
.grid th.hot, .sel th { background: #aad4ff; }
.sel th { font-weight: 700; }
.sel td { background: #ade9fa; }
.grid .mid { text-align: center; padding-left: 0; }
.g-num { width: 21px; }
.g-code { width: 111px; }
.g-unit { width: 46px; }
.g-name { width: 201px; }
.mono { font-family: "Liberation Mono", "Noto Sans CJK SC", monospace; font-size: 10px; }
.grid .code { padding-left: 1px; }
.grid .cur { border-right: 2px solid #808080; border-bottom: 2px solid #808080; }
.elbow { width: 18px; height: 12px; margin: -12px 4px 0 7px; border-left: 1px solid #bfc2ca; border-bottom: 1px solid #bfc2ca; }
.hbar { display: flex; align-items: center; gap: 3px; margin: auto 0 4px 2px; }
.hbar svg { width: 4px; height: 8px; }
.hbar i { flex: 1; height: 8px; border-radius: 4px 0 0 4px; background: #c8c8c8; }
.query { flex: 1; border-left: 1px solid #bfc2ca; background: #fff; }
.qtabs { display: flex; align-items: flex-end; gap: 3px; height: 34px; background: #efefef; border-bottom: 1px solid #bfc2ca; }
.qtab { display: flex; align-items: center; height: 22px; padding: 2px 8px 0 4px; background: #dcdcdc; border-radius: 2px 2px 0 0; color: #444; font-weight: 500; }
.qtab.on { height: 26px; margin-bottom: -1px; background: #fff; border: 1px solid #bfc2ca; border-bottom: 0; border-left: 0; color: #2c80e2; font-weight: 500; }
.qx { margin: -6px 0 0 8px; }
.qx svg { width: 8px; height: 8px; }
.qend { width: 1px; height: 29px; margin-left: -2px; background: #bfc2ca; }
.filters { display: flex; gap: 7px; height: 26px; padding-left: 5px; background: #efefef; border-bottom: 1px solid #bfc2ca; }
.filters label { display: flex; align-items: center; gap: 7px; }
.filters input { appearance: none; width: 14px; height: 14px; border: 1px solid #888; border-radius: 50%; background: #fff; }
.filters input:checked { background: radial-gradient(#4797f0 3px, #fff 4px); }
.grid.small { width: 379px; margin-left: 1px; }

.marks { position: absolute; left: 0; top: 0; pointer-events: none; }
</style>
